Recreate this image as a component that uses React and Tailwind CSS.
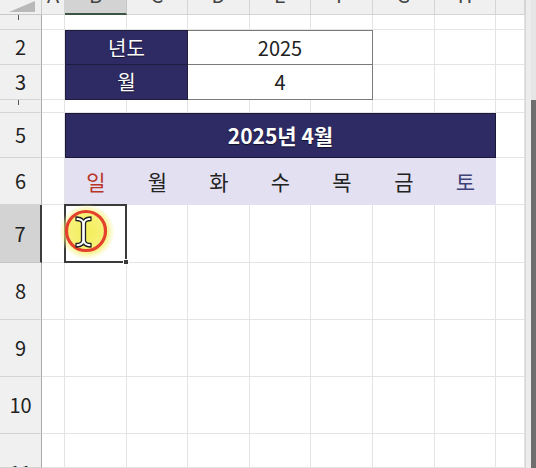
import React from "react";

const FONT = "font-['Noto_Sans_CJK_KR','Noto_Sans',sans-serif]";
const LETTERS = ["A", "B", "C", "D", "E", "F", "G", "H", "I"];
const DAYS = ["일", "월", "화", "수", "목", "금", "토"];

function Plain({ span = "" }) {
  return <div className={`bg-white border-r border-b border-[#e4e4e4] ${span}`} />;
}

function RowHead({ children, selected, tick, clip }) {
  return (
    <div
      className={`flex justify-center border-b border-r overflow-hidden text-[20px] text-[#222] ${
        selected
          ? "bg-[#d3d3d3] border-r-2 border-r-[#3d3d3d] border-b-[#c4c4c4]"
          : "bg-[#f0f0f0] border-r-[#a9a9a9] border-b-[#d4d4d4]"
      } ${clip ? "items-start" : "items-center"}`}
    >
      {tick && <span className="w-px h-[5px] bg-[#555] self-start -ml-[4px]" />}
      {clip ? <span className="leading-[20px] mt-[29px]">{children}</span> : children}
    </div>
  );
}

function ColHead({ letter }) {
  const sel = letter === "B";
  return (
    <div
      className={`flex justify-center overflow-hidden border-r text-[20px] text-[#444] ${
        sel
          ? "bg-[#d3d3d3] border-b-2 border-b-[#3b5444] border-r-[#c4c4c4]"
          : "bg-[#f0f0f0] border-b border-b-[#d4d4d4] border-r-[#d4d4d4]"
      }`}
    >
      <span className="leading-[20px] -mt-[15px]">{letter !== "I" ? letter : ""}</span>
    </div>
  );
}

function Cursor() {
  return (
    <svg
      width="60"
      height="60"
      viewBox="0 0 60 60"
      className="absolute left-[-9px] top-[-4px] pointer-events-none"
    >
      <defs>
        <radialGradient id="glow" cx="50%" cy="50%" r="50%">
          <stop offset="0%" stopColor="#f4ee5a" />
          <stop offset="70%" stopColor="#f6f06c" stopOpacity="0.9" />
          <stop offset="100%" stopColor="#f8f4a0" stopOpacity="0" />
        </radialGradient>
      </defs>
      <circle cx="31" cy="31" r="28" fill="url(#glow)" />
      <circle cx="30" cy="30" r="19.5" fill="none" stroke="#e4402e" strokeWidth="3.2" />
      <path
        d="M20 16 C23 16 26 17 27.5 19 C29 17 32 16 35 16 L35 19.5 C32 19.5 29.5 20.5 29.5 22.5 L29.5 39.5 C29.5 41.5 32 42.5 35 42.5 L35 46 C32 46 29 45 27.5 43 C26 45 23 46 20 46 L20 42.5 C23 42.5 25.5 41.5 25.5 39.5 L25.5 22.5 C25.5 20.5 23 19.5 20 19.5 Z"
        fill="#fff"
        stroke="#222"
        strokeWidth="1.3"
        strokeLinejoin="round"
      />
    </svg>
  );
}

export default function App() {
  return (
    <div className={`flex w-[536px] h-[468px] overflow-hidden bg-white ${FONT}`}>
      <div className="grid w-[525px] grid-cols-[42px_23px_62px_61px_62px_61px_62px_62px_61px_29px] grid-rows-[15px_15px_35px_35px_13px_45px_47px_58px_57px_57px_57px_34px]">
        {/* column headers */}
        <div className="bg-[#f0f0f0] border-r border-b border-[#c8c8c8] flex justify-end items-end pr-[6px] pb-[2px]">
          <div className="w-0 h-0 border-l-[26px] border-l-transparent border-b-[11px] border-b-[#b9b9b9]" />
        </div>
        {LETTERS.map((l) => (
          <ColHead key={l} letter={l} />
        ))}

        {/* row 1 */}
        <RowHead tick />
        {LETTERS.map((l) => (
          <Plain key={l} />
        ))}

        {/* row 2 */}
        <RowHead>2</RowHead>
        <Plain />
        <div className="col-span-2 bg-[#2e2a63] border border-[#1f1c3f] flex items-center justify-center text-white text-[20px] [text-shadow:0_1px_1px_rgba(0,0,0,0.5)]">
          년도
        </div>
        <div className="col-span-3 bg-white border-t border-r border-b border-[#7a7a7a] flex items-center justify-center text-[20px] text-[#222]">
          2025
        </div>
        <Plain />
        <Plain />
        <Plain />

        {/* row 3 */}
        <RowHead>3</RowHead>
        <Plain />
        <div className="col-span-2 bg-[#2e2a63] border-x border-b border-[#1f1c3f] flex items-center justify-center text-white text-[20px] [text-shadow:0_1px_1px_rgba(0,0,0,0.5)]">
          월
        </div>
        <div className="col-span-3 bg-white border-r border-b border-[#7a7a7a] flex items-center justify-center text-[20px] text-[#222]">
          4
        </div>
        <Plain />
        <Plain />
        <Plain />

        {/* row 4 */}
        <RowHead tick />
        {LETTERS.map((l) => (
          <Plain key={l} />
        ))}

        {/* row 5 */}
        <RowHead>5</RowHead>
        <Plain />
        <div className="col-span-7 bg-[#2e2a63] border border-[#1a1838] flex items-center justify-center text-white text-[21px] font-bold [text-shadow:0_1px_1px_rgba(0,0,0,0.6)]">
          2025년 4월
        </div>
        <Plain />

        {/* row 6 */}
        <RowHead>6</RowHead>
        <Plain />
        {DAYS.map((d, i) => (
          <div
            key={d}
            className={`bg-[#e2e0f1] flex items-center justify-center text-[21px] ${
              i === 0 ? "text-[#b8352a]" : i === 6 ? "text-[#3d4277]" : "text-[#222]"
            }`}
          >
            {d}
          </div>
        ))}
        <Plain />

        {/* row 7 */}
        <RowHead selected>7</RowHead>
        <Plain />
        <div className="relative bg-white border-r border-b border-[#e4e4e4]">
          <div className="absolute -left-px -top-px -right-px -bottom-px border-2 border-[#3a3a3a]" />
          <div className="absolute -right-[3px] -bottom-[3px] w-[6px] h-[6px] bg-[#3a3a3a] border border-white" />
          <Cursor />
        </div>
        {LETTERS.slice(2).map((l) => (
          <Plain key={l} />
        ))}

        {/* rows 8 - 10 */}
        {[8, 9, 10].map((n) => (
          <React.Fragment key={n}>
            <RowHead>{n}</RowHead>
            {LETTERS.map((l) => (
              <Plain key={l} />
            ))}
          </React.Fragment>
        ))}

        {/* row 11 */}
        <RowHead clip>11</RowHead>
        {LETTERS.map((l) => (
          <Plain key={l} />
        ))}
      </div>

      {/* scrollbar */}
      <div className="flex w-[11px] border-l border-[#d6d6d6]">
        <div className="w-[5px] bg-[#ececec]" />
        <div className="flex-1 flex flex-col">
          <div className="h-[100px] bg-[#e6e6e6]" />
          <div className="flex-1 bg-[#6e6e6e]" />
        </div>
      </div>
    </div>
  );
}
